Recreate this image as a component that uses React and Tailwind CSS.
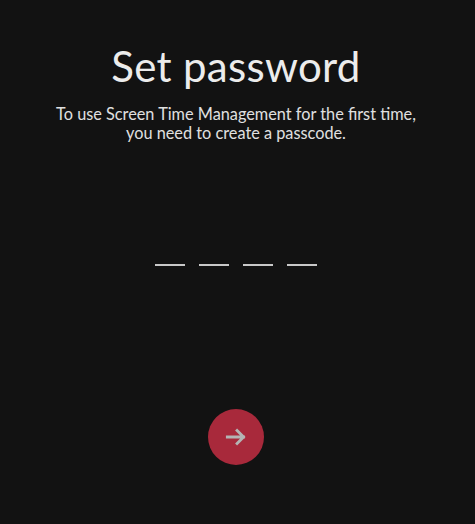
export default function App() {
  return (
    <div className="w-[475px] h-[524px] bg-[#121212] flex flex-col items-center pr-[3px] text-white" style={{ fontFamily: "Lato, 'Open Sans', sans-serif" }}>
      <h1 className="mt-[40px] text-[42px] leading-[52px] font-normal text-[#ececec] tracking-[0.3px]">Set password</h1>
      <p className="mt-[12px] text-[16.3px] leading-[19px] text-center text-[#e0e0e0]">
        To use Screen Time Management for the first time,
        <br />
        you need to create a passcode.
      </p>
      <div className="mt-[122px] flex gap-[14px]">
        {[0, 1, 2, 3].map((i) => (
          <div key={i} className="w-[30px] h-[2px] bg-[#c8c8c8]" />
        ))}
      </div>
      <button className="mt-[143px] w-[56px] h-[56px] rounded-full bg-[#a8293b] flex items-center justify-center">
        <svg width="26" height="26" viewBox="0 0 24 24" fill="none" stroke="#b4b4b4" strokeWidth="2.6" strokeLinecap="square">
          <path d="M4 12h15M13 6l6 6-6 6" />
        </svg>
      </button>
    </div>
  );
}
